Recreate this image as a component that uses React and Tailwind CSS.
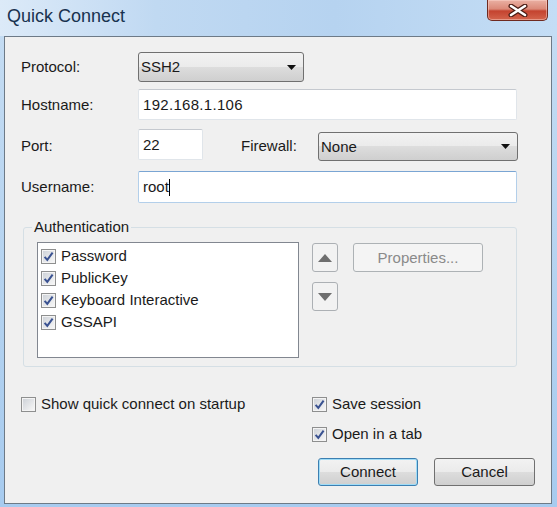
import React from "react";

const btnFace =
  "bg-[linear-gradient(#f2f2f2,#ebebeb_50%,#dddddd_50%,#cfcfcf)]";

function Check({ checked }) {
  return (
    <span className="flex h-[15px] w-[15px] shrink-0 border border-[#8e8f8f] bg-[#f4f4f4] p-[1px]">
      <span className="flex flex-1 items-center justify-center bg-[linear-gradient(135deg,#cfd3d9,#f6f6f6)]">
        {checked && (
          <svg width="11" height="11" viewBox="0 0 11 11">
            <path
              d="M1.6 5.8 L4.3 8.9 L9.6 1.6"
              fill="none"
              stroke="#3a5291"
              strokeWidth="2"
            />
          </svg>
        )}
      </span>
    </span>
  );
}

// win7 style dropdown
function Combo({ value, className }) {
  return (
    <div
      className={`flex items-center justify-between rounded-[3px] border border-[#707070] ${btnFace} pl-[2px] pr-[7px] ${className}`}
    >
      <span>{value}</span>
      <svg width="9" height="5" viewBox="0 0 9 5">
        <path d="M0 0 H9 L4.5 5 Z" fill="#111" />
      </svg>
    </div>
  );
}

function TextBox({ children, className, focused }) {
  return (
    <div
      className={`flex items-center rounded-[2px] border bg-white pl-[4px] ${
        focused
          ? "border-[#b3cfea] border-t-[#7aa5d3]"
          : "border-[#e0e5ea] border-t-[#c5c9cf]"
      } ${className}`}
    >
      {children}
    </div>
  );
}

function ArrowButton({ up }) {
  return (
    <div className="flex h-[29px] w-[26px] items-center justify-center rounded-[3px] border border-[#acb0b4] bg-[#f2f2f2]">
      <svg width="14" height="8" viewBox="0 0 14 8">
        <path d={up ? "M0 8 H14 L7 0 Z" : "M0 0 H14 L7 8 Z"} fill="#6e6e6e" />
      </svg>
    </div>
  );
}

function Label({ children, className }) {
  return <div className={`shrink-0 ${className}`}>{children}</div>;
}

export default function App() {
  const methods = ["Password", "PublicKey", "Keyboard Interactive", "GSSAPI"];

  return (
    <div className="h-[507px] w-[557px] overflow-hidden bg-[linear-gradient(#c6ddf3,#b3d2f0_60%,#a7cbef)] font-['Liberation_Sans',Arial,sans-serif] text-[15px] text-[#1a1a1a]">
      {/* title bar */}
      <div className="flex h-[36px] items-start justify-between bg-[linear-gradient(90deg,#dceaf8,#c0d9f2_28%,#b6d3f0_60%,#c4ddf5)] pl-[7px] pr-[9px]">
        <div className="mt-[6px] text-[18px] leading-[21px] text-[#18324f]">
          Quick Connect
        </div>
        <div className="flex h-[21px] w-[61px] items-center justify-center rounded-b-[5px] border border-t-0 border-[#6f2a20] bg-[linear-gradient(#eab0a3,#db8978_45%,#c4432f_55%,#d3644c)] shadow-[inset_0_0_0_1px_rgba(255,220,210,0.45)]">
          <svg width="20" height="13" viewBox="0 0 20 13">
            <path
              d="M3 2 L17 11 M17 2 L3 11"
              stroke="#4a1c14"
              strokeWidth="5"
              strokeLinecap="round"
            />
            <path
              d="M3 2 L17 11 M17 2 L3 11"
              stroke="#ffffff"
              strokeWidth="2.6"
              strokeLinecap="round"
            />
          </svg>
        </div>
      </div>

      {/* client area */}
      <div className="ml-[4px] flex h-[468px] w-[548px] flex-col border border-[#6d7a87] bg-[#f0f0f0] pl-[16px] pt-[15px] leading-[18px]">
        <div className="flex h-[30px] items-center">
          <Label className="w-[117px]">Protocol:</Label>
          <Combo value="SSH2" className="h-[30px] w-[166px]" />
        </div>

        <div className="mt-[7px] flex h-[31px] items-center">
          <Label className="w-[117px]">Hostname:</Label>
          <TextBox className="h-[31px] w-[379px] tracking-[0.3px]">
            192.168.1.106
          </TextBox>
        </div>

        <div className="mt-[9px] flex h-[32px] items-start">
          <Label className="mt-[8px] w-[117px]">Port:</Label>
          <TextBox className="h-[31px] w-[65px]">22</TextBox>
          <Label className="ml-[38px] mt-[8px] w-[77px]">Firewall:</Label>
          <Combo value="None" className="mt-[3px] h-[29px] w-[200px]" />
        </div>

        <div className="mt-[10px] flex h-[32px] items-center">
          <Label className="w-[117px]">Username:</Label>
          <TextBox focused className="h-[32px] w-[379px]">
            <span>root</span>
            <span className="h-[17px] w-px bg-black" />
          </TextBox>
        </div>

        {/* authentication group */}
        <fieldset className="ml-[2px] mt-[15px] w-[494px] rounded-[3px] border border-[#d5dfe5] px-0 pb-[8px]">
          <legend className="ml-[8px] px-[2px] leading-[18px]">
            Authentication
          </legend>
          <div className="flex items-start pl-[13px] pt-[6px]">
            <div className="h-[116px] w-[262px] border border-[#828790] bg-white pl-[3px] pt-[2px]">
              {methods.map((m) => (
                <div key={m} className="flex h-[22px] items-center gap-[5px]">
                  <Check checked />
                  <span>{m}</span>
                </div>
              ))}
            </div>
            <div className="ml-[13px] flex flex-col gap-[10px] pt-[1px]">
              <ArrowButton up />
              <ArrowButton />
            </div>
            <div className="ml-[15px] mt-[1px] flex h-[29px] w-[130px] items-center justify-center rounded-[3px] border border-[#adb2b5] bg-[#f4f4f4] text-[#8a8a8a]">
              Properties...
            </div>
          </div>
        </fieldset>

        {/* options */}
        <div className="mt-[28px] flex">
          <div className="w-[291px]">
            <div className="flex h-[18px] items-center gap-[5px]">
              <Check />
              <span>Show quick connect on startup</span>
            </div>
          </div>
          <div className="flex flex-col gap-[12px]">
            <div className="flex h-[18px] items-center gap-[5px]">
              <Check checked />
              <span>Save session</span>
            </div>
            <div className="flex h-[18px] items-center gap-[5px]">
              <Check checked />
              <span>Open in a tab</span>
            </div>
          </div>
        </div>

        <div className="mt-[15px] flex gap-[16px] pl-[297px]">
          <div
            className={`flex h-[28px] w-[100px] items-center justify-center rounded-[3px] border border-[#3c7fb1] ${btnFace} shadow-[inset_0_0_0_1px_#9fdcf7]`}
          >
            Connect
          </div>
          <div
            className={`flex h-[28px] w-[101px] items-center justify-center rounded-[3px] border border-[#707070] ${btnFace}`}
          >
            Cancel
          </div>
        </div>
      </div>
    </div>
  );
}
